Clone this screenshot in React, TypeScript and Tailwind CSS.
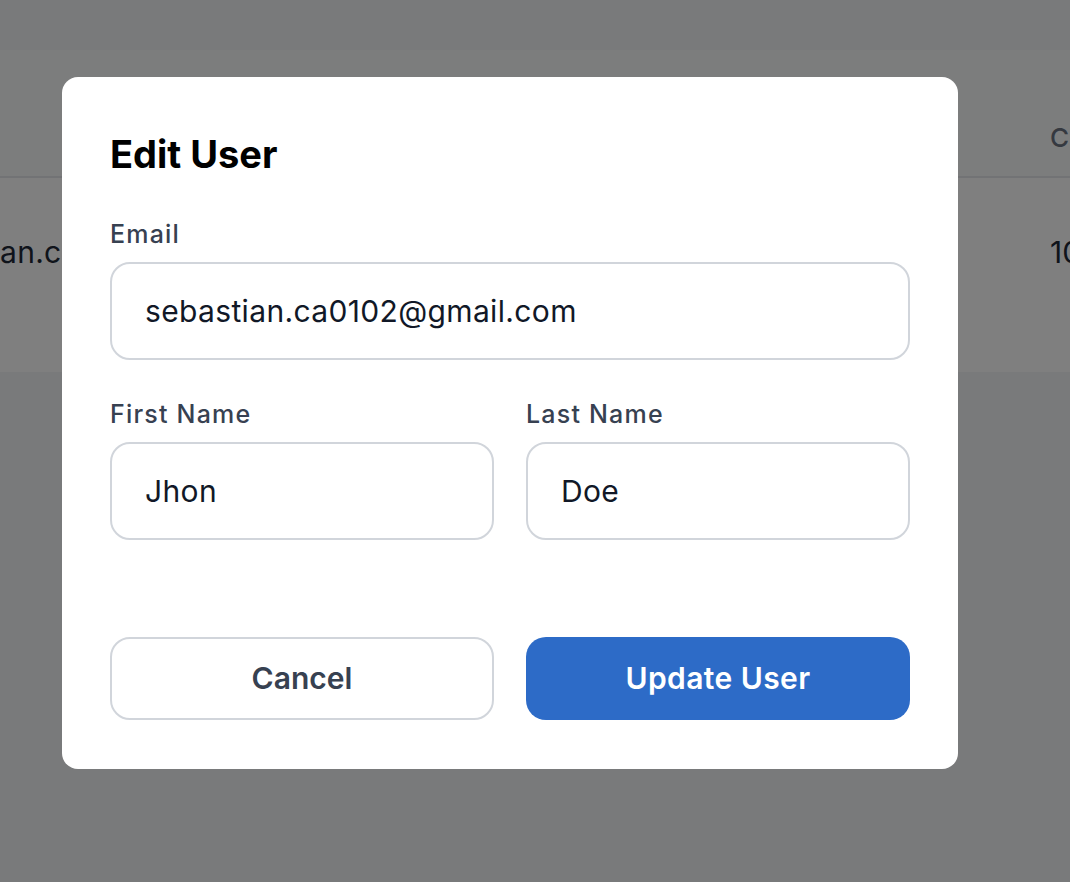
export default function App() {
  return (
    <div className="relative min-h-[882px] overflow-hidden bg-[#f3f4f6] font-['Inter',sans-serif]">
      {/* page behind the dialog */}
      <div className="pt-[50px]">
        <div className="bg-white">
          <div className="flex h-[128px] items-start justify-end border-b-2 border-[#e5e7eb] bg-[#f9fafb] pt-[72px]">
            <span className="w-[20px] overflow-hidden text-[26px] font-medium leading-[32px] text-[#6b7280]">C</span>
          </div>
          <div className="flex h-[194px] items-start justify-between pt-[52px]">
            <span className="w-[62px] overflow-hidden whitespace-nowrap text-[30px] tracking-[0.3px] text-[#1f2937]">
              an.ca0102@gmail.com
            </span>
            <span className="w-[20px] overflow-hidden whitespace-nowrap text-[30px] text-[#1f2937]">10</span>
          </div>
        </div>
      </div>

      {/* dialog */}
      <div className="fixed inset-0 bg-black/50 pl-[62px] pt-[77px]">
        <div className="w-[896px] rounded-[16px] bg-white px-12 pb-[49px] pt-[56px]">
          <h2 className="text-[38px] font-bold leading-[42px] text-black">Edit User</h2>

          <div className="mt-[43px] flex flex-col gap-3">
            <label className="text-[25px] font-medium leading-[32px] tracking-[1.2px] text-[#374151]">Email</label>
            <input
              className="h-[98px] w-full rounded-[20px] border-2 border-[#d1d5db] px-[33px] text-[30px] tracking-[0.35px] text-[#111827] outline-none"
              defaultValue="sebastian.ca0102@gmail.com"
            />
          </div>

          <div className="mt-[38px] grid grid-cols-2 gap-8">
            <div className="flex flex-col gap-3">
              <label className="text-[25px] font-medium leading-[32px] tracking-[1.2px] text-[#374151]">First Name</label>
              <input
                className="h-[98px] w-full rounded-[20px] border-2 border-[#d1d5db] px-[33px] text-[30px] tracking-[0.35px] text-[#111827] outline-none"
                defaultValue="Jhon"
              />
            </div>
            <div className="flex flex-col gap-3">
              <label className="text-[25px] font-medium leading-[32px] tracking-[1.2px] text-[#374151]">Last Name</label>
              <input
                className="h-[98px] w-full rounded-[20px] border-2 border-[#d1d5db] px-[33px] text-[30px] tracking-[0.35px] text-[#111827] outline-none"
                defaultValue="Doe"
              />
            </div>
          </div>

          <div className="mt-[97px] grid grid-cols-2 gap-8">
            <button
              type="button"
              className="h-[83px] rounded-[20px] border-2 border-[#d1d5db] bg-white text-[30px] font-semibold text-[#374151]"
            >
              Cancel
            </button>
            <button
              type="button"
              className="h-[83px] rounded-[20px] bg-[#2d6bc7] text-[30px] font-semibold tracking-[0.4px] text-white"
            >
              Update User
            </button>
          </div>
        </div>
      </div>
    </div>
  );
}
